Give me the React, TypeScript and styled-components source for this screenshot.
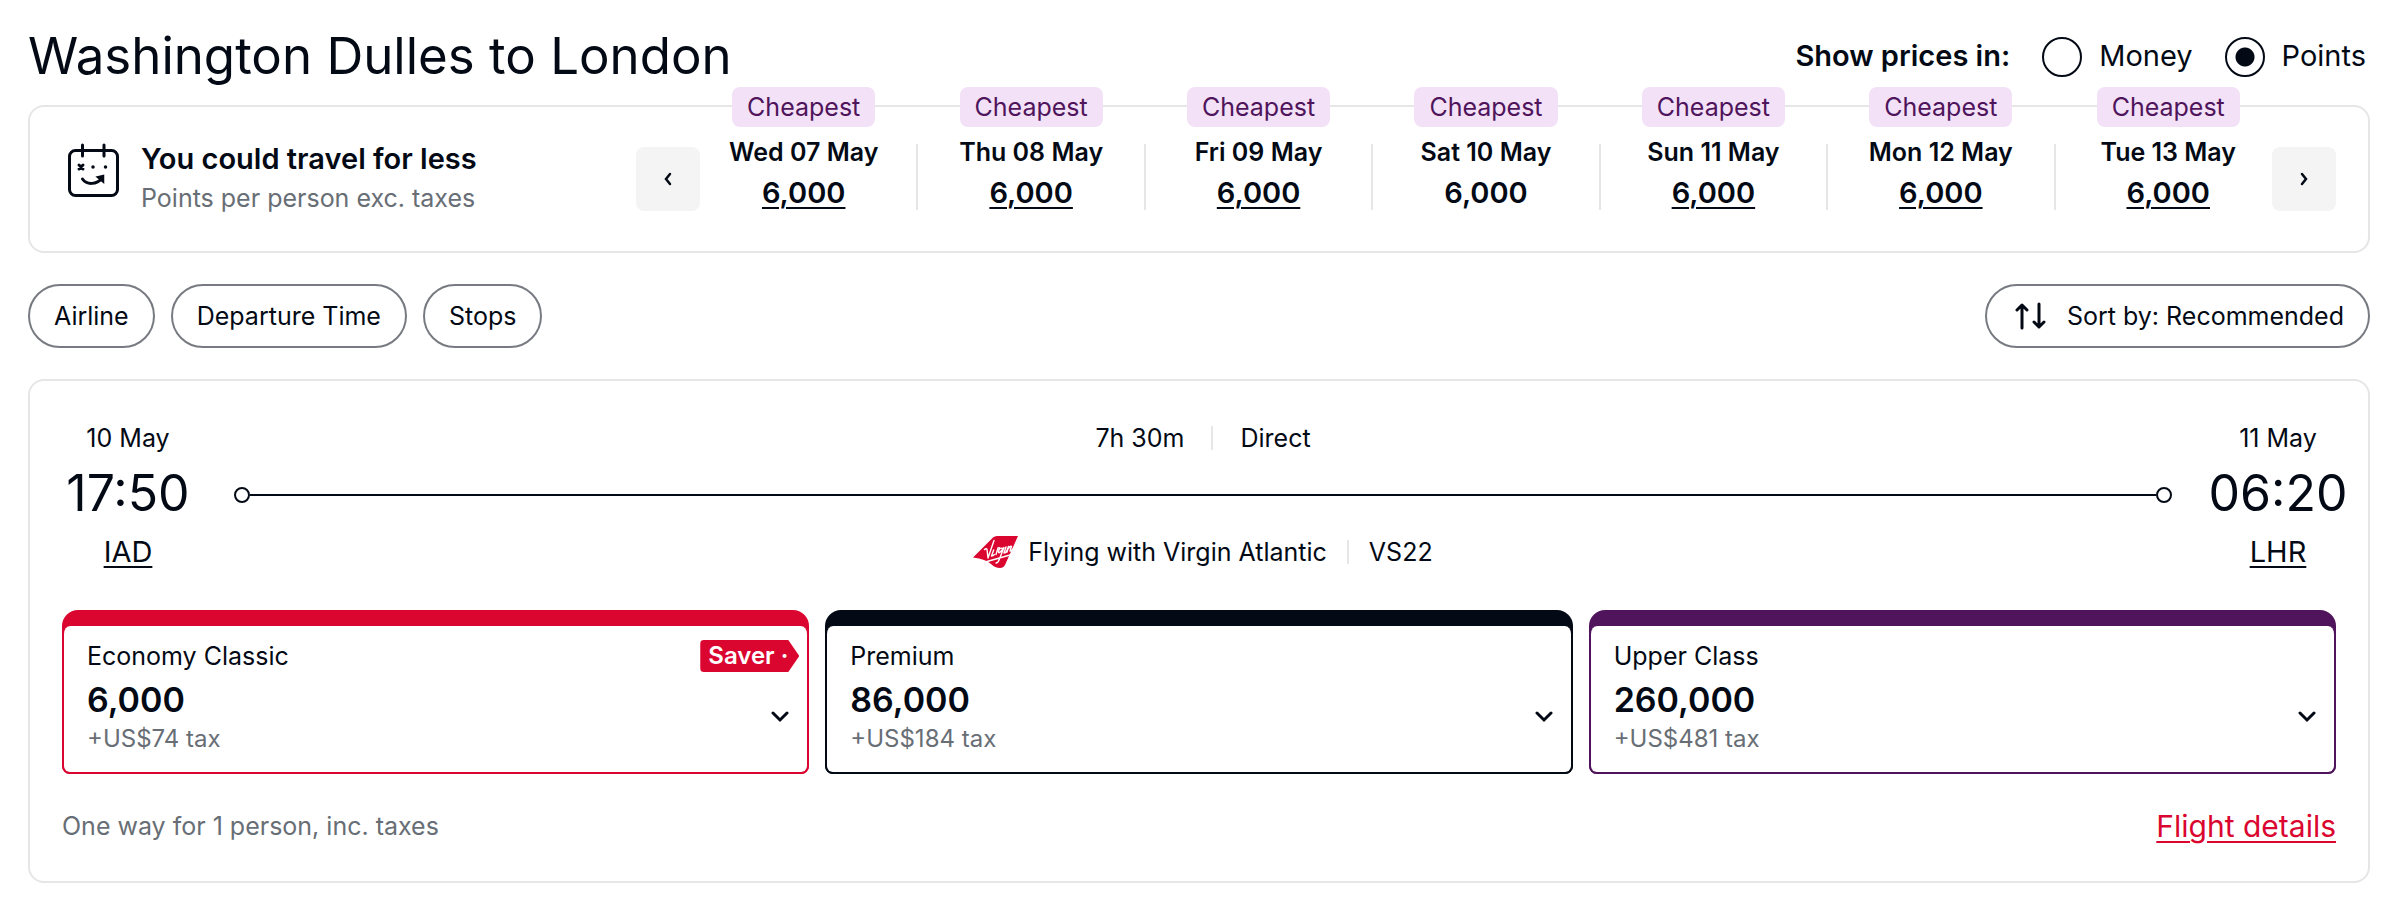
import React, { useState } from "react";
import styled, { createGlobalStyle } from "styled-components";

const ink = "#030a15";
const muted = "#686e75";
const line = "#e6e6e6";
const red = "#da0630";
const purple = "#4f145b";

const GlobalStyle = createGlobalStyle`
  * { box-sizing: border-box; }
  body {
    margin: 0;
    background: #fff;
    color: ${ink};
    font: 400 25px/32px Inter, "Liberation Sans", sans-serif;
  }
  button, input { font: inherit; color: inherit; }
  h1, p, ul, fieldset { margin: 0; padding: 0; border: 0; }
  ul { list-style: none; }
  a { color: inherit; text-decoration-thickness: 2px; text-underline-offset: 4px; }
`;

const Page = styled.main`
  padding: 24px 30px 44px 28px;
`;

const Header = styled.header`
  display: flex;
  justify-content: space-between;
  align-items: center;
  height: 64px;
  margin-bottom: 17px;
`;

const Title = styled.h1`
  font-size: 51px;
  line-height: 62px;
  font-weight: 400;
`;

const PriceMode = styled.fieldset`
  display: flex;
  align-items: center;
  gap: 32px;
  padding-right: 4px;
  font-size: 29px;
  line-height: 40px;
`;

const PriceModeLabel = styled.span`
  font-weight: 600;
`;

const RadioLabel = styled.label`
  display: flex;
  align-items: center;
  gap: 17px;
`;

const Radio = styled.input`
  appearance: none;
  width: 40px;
  height: 40px;
  margin: 2px 0 0;
  border: 2px solid ${ink};
  border-radius: 50%;
  &:checked {
    background: radial-gradient(circle, ${ink} 9px, transparent 10px);
  }
`;

const Card = styled.section`
  border: 2px solid ${line};
  border-radius: 16px;
`;

const DealCard = styled(Card)`
  display: flex;
  height: 148px;
  padding: 0 32px 0 38px;
`;

const DealIntro = styled.div`
  display: flex;
  flex: none;
  width: 568px;
  gap: 22px;
  padding-top: 32px;
  svg { margin-top: 4px; }
`;

const DealTitle = styled.p`
  font-size: 29px;
  line-height: 40px;
  font-weight: 600;
`;

const Muted = styled.p`
  color: ${muted};
  line-height: 38px;
`;

const Arrow = styled.button`
  display: grid;
  place-items: center;
  flex: none;
  width: 64px;
  height: 64px;
  margin-top: 40px;
  padding: 0;
  border: 0;
  border-radius: 8px;
  background: #f4f4f4;
`;

const Days = styled.ul`
  display: flex;
  flex: 1;
  margin: 0 -9px;
`;

const Day = styled.li`
  position: relative;
  display: flex;
  flex: 1 1 0;
  flex-direction: column;
  align-items: center;
  height: 66px;
  margin-top: 37px;
  & + & { border-left: 2px solid ${line}; }
`;

const Badge = styled.span`
  position: absolute;
  top: -57px;
  padding: 4px 15px;
  border-radius: 8px;
  background: #f3e1f7;
  color: ${purple};
`;

const DayName = styled.span`
  line-height: 16px;
  font-weight: 600;
`;

const DayPrice = styled.a<{ $plain?: boolean }>`
  margin-top: 13px;
  font-size: 29px;
  line-height: 40px;
  font-weight: 600;
  text-decoration-line: ${(p) => (p.$plain ? "none" : "underline")};
`;

const Filters = styled.div`
  display: flex;
  gap: 16px;
  margin: 31px 0;
`;

const Pill = styled.button<{ $end?: boolean }>`
  display: flex;
  align-items: center;
  gap: 20px;
  height: 64px;
  margin-left: ${(p) => (p.$end ? "auto" : "0")};
  padding: 0 24px;
  border: 2px solid #777b81;
  border-radius: 32px;
  background: #fff;
`;

const FlightCard = styled(Card)`
  padding: 41px 32px 35px;
`;

const Journey = styled.div`
  display: flex;
  gap: 37px;
  margin: 0 -11px 0 -3px;
`;

const Stop = styled.div`
  display: flex;
  flex: none;
  flex-direction: column;
  align-items: center;
  width: 138px;
`;

const Time = styled.time`
  margin: 7px 0;
  font-size: 50px;
  line-height: 64px;
`;

const Airport = styled.a`
  font-size: 29px;
  line-height: 40px;
`;

const Route = styled.div`
  display: flex;
  flex: 1;
  flex-direction: column;
  align-items: center;
`;

const Facts = styled.div<{ $gap: number }>`
  display: flex;
  align-items: center;
  gap: ${(p) => p.$gap}px;
  height: 32px;
`;

const Split = styled.span`
  width: 2px;
  height: 24px;
  background: ${line};
`;

const Track = styled.div`
  display: flex;
  align-items: center;
  align-self: stretch;
  height: 16px;
  margin: 33px 0;
`;

const Dot = styled.span`
  width: 16px;
  height: 16px;
  border: 2px solid ${ink};
  border-radius: 50%;
`;

const Rail = styled.span`
  flex: 1;
  height: 2px;
  background: ${ink};
`;

const Carrier = styled.span`
  display: flex;
  align-items: center;
  gap: 10px;
`;

const Fares = styled.div`
  display: grid;
  grid-template-columns: repeat(3, 1fr);
  gap: 16px;
  margin-top: 38px;
`;

const Fare = styled.button<{ $color: string }>`
  display: block;
  height: 164px;
  padding: 16px 0 0;
  border: 0;
  border-radius: 16px 16px 8px 8px;
  background: ${(p) => p.$color};
  text-align: left;
`;

const FareBody = styled.span<{ $color: string }>`
  display: flex;
  justify-content: space-between;
  height: 148px;
  padding: 14px 8px 0 23px;
  border: solid ${(p) => p.$color};
  border-width: 0 2px 2px;
  border-radius: 8px;
  background: #fff;
`;

const FareText = styled.span`
  display: flex;
  flex-direction: column;
`;

const FarePrice = styled.strong`
  font-size: 34px;
  line-height: 56px;
  font-weight: 600;
`;

const FareTax = styled.span`
  color: ${muted};
  font-size: 24px;
  line-height: 22px;
`;

const FareSide = styled.span`
  display: flex;
  flex-direction: column;
  align-items: flex-end;
`;

const Saver = styled.span`
  padding: 0 11px 0 8px;
  border-radius: 4px;
  background: ${red};
  clip-path: polygon(0 0, calc(100% - 11px) 0, 100% 50%, calc(100% - 11px) 100%, 0 100%);
  color: #fff;
  font-size: 24px;
  font-weight: 600;
`;

const ChevronBox = styled.span`
  display: grid;
  place-items: center;
  width: 38px;
  height: 32px;
  margin-top: auto;
  margin-bottom: 39px;
`;

const Footer = styled.footer`
  display: flex;
  justify-content: space-between;
  align-items: center;
  height: 40px;
  margin-top: 32px;
`;

const DetailsLink = styled.a`
  color: ${red};
  font-size: 30px;
  line-height: 40px;
`;

const Calendar = () => (
  <svg width="51" height="54" viewBox="0 0 51 54" fill="none" stroke={ink} strokeWidth="3" strokeLinecap="round" aria-hidden="true">
    <rect x="1.5" y="7.5" width="48" height="45" rx="6" />
    <path d="M14.500 2v11M36 2v11" />
    <path d="M11 22l4 4M15 22l-4 4" />
    <path d="M14.500 36c4 6 14 6 20-1" />
    <path d="M29 34l6.500-1.500v7z" fill={ink} strokeWidth="1.500" />
    <path d="M25 24h.01M37.500 24h.01" strokeWidth="3.500" />
  </svg>
);

const Chevron = ({ d, w = 16, h = 16, stroke = 2.5 }: { d: string; w?: number; h?: number; stroke?: number }) => (
  <svg width={w} height={h} viewBox={`0 0 ${w} ${h}`} fill="none" stroke={ink} strokeWidth={stroke} strokeLinecap="round" aria-hidden="true">
    <path d={d} />
  </svg>
);

const SortIcon = () => (
  <svg width="36" height="28" viewBox="0 0 36 28" fill="none" stroke={ink} strokeWidth="3" strokeLinecap="round" strokeLinejoin="round" aria-hidden="true">
    <path d="M11 26V3M6 8l5-5 5 5M28 2v23M23 20l5 5 5-5" />
  </svg>
);

const VirginLogo = () => (
  <svg width="45" height="32" viewBox="0 0 45 32" aria-hidden="true">
    <path d="M20 1.500Q21.500 0 24 0H45L32 29q-1.500 3-5 3-5 0-9-4-5-5-18-6.500z" fill={red} />
    <g fill="none" stroke="#fff" strokeWidth="1.400" strokeLinecap="round" strokeLinejoin="round">
      <path d="M11.500 13.500q2-1.500 2.500 0l1 8.500L21 4.500M18.500 20l2.200-6M18.800 19.800q1 .500 2.500-1.300M23 18.500l2-6.500q2-1 1.500 1M29.500 12.500q-3-1.500-4 3 0 3 3.500-1.500l2-2.500-5 12.500q-1 3-3 3M31 17l2-6M31 16.500q1 1 2.500-1l2-5-1.500 5.500M35 13q3-4 3.500-2.500l-1.500 4.500q1 .500 3-2M14 25.500L37 19" />
    </g>
  </svg>
);

const days = [
  "Wed 07 May",
  "Thu 08 May",
  "Fri 09 May",
  "Sat 10 May",
  "Sun 11 May",
  "Mon 12 May",
  "Tue 13 May",
];

const fares = [
  { name: "Economy Classic", price: "6,000", tax: "+US$74 tax", color: red, saver: true },
  { name: "Premium", price: "86,000", tax: "+US$184 tax", color: ink, saver: false },
  { name: "Upper Class", price: "260,000", tax: "+US$481 tax", color: purple, saver: false },
];

export default function App() {
  const [mode, setMode] = useState("Points");
  return (
    <>
      <GlobalStyle />
      <Page>
        <Header>
          <Title>Washington Dulles to London</Title>
          <PriceMode aria-labelledby="price-mode">
            <PriceModeLabel id="price-mode">Show prices in:</PriceModeLabel>
            {["Money", "Points"].map((m) => (
              <RadioLabel key={m}>
                <Radio type="radio" name="mode" value={m} checked={mode === m} onChange={() => setMode(m)} />
                {m}
              </RadioLabel>
            ))}
          </PriceMode>
        </Header>

        <DealCard>
          <DealIntro>
            <Calendar />
            <div>
              <DealTitle>You could travel for less</DealTitle>
              <Muted>Points per person exc. taxes</Muted>
            </div>
          </DealIntro>
          <Arrow aria-label="Earlier dates">
            <Chevron d="M10 3L6 8l4 5" />
          </Arrow>
          <Days>
            {days.map((day) => (
              <Day key={day}>
                <Badge>Cheapest</Badge>
                <DayName>{day}</DayName>
                <DayPrice href="#" $plain={day === "Sat 10 May"}>6,000</DayPrice>
              </Day>
            ))}
          </Days>
          <Arrow aria-label="Later dates">
            <Chevron d="M6 3l4 5-4 5" />
          </Arrow>
        </DealCard>

        <Filters>
          <Pill>Airline</Pill>
          <Pill>Departure Time</Pill>
          <Pill>Stops</Pill>
          <Pill $end>
            <SortIcon />
            Sort by: Recommended
          </Pill>
        </Filters>

        <FlightCard>
          <Journey>
            <Stop>
              <span>10 May</span>
              <Time>17:50</Time>
              <Airport href="#">IAD</Airport>
            </Stop>
            <Route>
              <Facts $gap={27}>
                <span>7h 30m</span>
                <Split />
                <span>Direct</span>
              </Facts>
              <Track>
                <Dot />
                <Rail />
                <Dot />
              </Track>
              <Facts $gap={20}>
                <Carrier>
                  <VirginLogo />
                  Flying with Virgin Atlantic
                </Carrier>
                <Split />
                <span>VS22</span>
              </Facts>
            </Route>
            <Stop>
              <span>11 May</span>
              <Time>06:20</Time>
              <Airport href="#">LHR</Airport>
            </Stop>
          </Journey>

          <Fares>
            {fares.map((fare) => (
              <Fare key={fare.name} $color={fare.color}>
                <FareBody $color={fare.color}>
                  <FareText>
                    <span>{fare.name}</span>
                    <FarePrice>{fare.price}</FarePrice>
                    <FareTax>{fare.tax}</FareTax>
                  </FareText>
                  <FareSide>
                    {fare.saver && <Saver>Saver ·</Saver>}
                    <ChevronBox>
                      <Chevron d="M2 2l7 7 7-7" w={18} h={12} stroke={3} />
                    </ChevronBox>
                  </FareSide>
                </FareBody>
              </Fare>
            ))}
          </Fares>

          <Footer>
            <Muted>One way for 1 person, inc. taxes</Muted>
            <DetailsLink href="#">Flight details</DetailsLink>
          </Footer>
        </FlightCard>
      </Page>
    </>
  );
}
